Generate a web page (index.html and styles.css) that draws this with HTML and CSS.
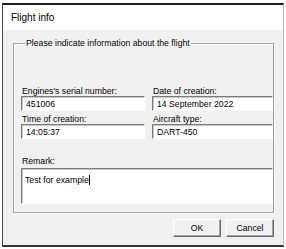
FILE: index.html
```html
<!DOCTYPE html>
<html lang="en">
<head>
<meta charset="UTF-8">
<title>Flight info</title>
<link rel="stylesheet" href="styles.css">
</head>
<body>
<div class="window">
<div class="titlebar">Flight info</div>
<div class="client">
<fieldset class="group">
<legend>Please indicate information about the flight</legend>
<div class="fields">
<div class="field">
<label>Engines's serial number:</label>
<input class="box" type="text" value="451006" readonly>
</div>
<div class="field">
<label>Date of creation:</label>
<input class="box" type="text" value="14 September 2022" readonly>
</div>
<div class="field">
<label>Time of creation:</label>
<input class="box" type="text" value="14:05:37" readonly>
</div>
<div class="field">
<label>Aircraft type:</label>
<input class="box" type="text" value="DART-450" readonly>
</div>
</div>
<div class="remark">
<label>Remark:</label>
<div class="memo">Test for example<span class="caret"></span></div>
</div>
</fieldset>
<div class="buttons">
<button class="btn">OK</button>
<button class="btn">Cancel</button>
</div>
</div>
</div>
</body>
</html>
```

FILE: styles.css
```css
* {
margin: 0;
padding: 0;
box-sizing: border-box;
font-family: "Liberation Sans", Arial, sans-serif;
}
body {
background-color: #fff;
}
.window {
margin: 3px 0 0 2px;
width: 282px;
height: 244px;
display: flex;
flex-direction: column;
border-top: 2px solid #1e1e1e;
border-left: 1px solid #4a4a4a;
border-bottom: 2px solid #333;
border-right: 1px solid #b5b5b5;
}
.titlebar {
height: 25px;
background-color: #fff;
padding-left: 8px;
line-height: 25px;
font-size: 10px;
color: #000;
}
.client {
flex: 1;
background-color: #f0f0f0;
padding: 8px 9px 0 10px;
display: flex;
flex-direction: column;
}
.group {
border: 1px solid #a0a0a0;
box-shadow: 1px 1px 0 #fff, inset 1px 1px 0 #fff;
padding: 38px 0 8px 7px;
}
.group legend {
margin-left: 4px;
padding: 0 1px;
font-size: 8.7px;
line-height: 10px;
color: #000;
}
.fields {
display: grid;
grid-template-columns: 124px 1fr;
column-gap: 7px;
row-gap: 3px;
}
.field label,
.remark label {
display: block;
font-size: 8.7px;
line-height: 10px;
color: #000;
padding-left: 1px;
}
.box {
display: block;
width: 100%;
height: 15px;
border: 1px solid;
border-color: #7a7a7a #fff #fff #7a7a7a;
box-shadow: inset 1px 1px 0 #c8c8c8;
background-color: #fff;
padding: 0 4px;
font-size: 8.7px;
color: #000;
outline: none;
}
.remark {
margin-top: 17px;
}
.remark label {
margin-bottom: 2px;
}
.memo {
height: 36px;
border: 1px solid;
border-color: #7a7a7a #fff #fff #7a7a7a;
box-shadow: inset 1px 1px 0 #c8c8c8;
background-color: #fff;
padding: 6px 3px 0;
font-size: 8.7px;
line-height: 10px;
color: #000;
}
.caret {
display: inline-block;
width: 1px;
height: 10px;
background-color: #000;
vertical-align: top;
}
.buttons {
display: flex;
justify-content: flex-end;
gap: 5px;
margin-top: 6px;
padding-right: 0;
}
.btn {
width: 48px;
height: 18px;
background-color: #f0f0f0;
border: 1px solid;
border-color: #fff #696969 #696969 #fff;
box-shadow: inset -1px -1px 0 #a0a0a0;
font-size: 8.7px;
color: #000;
}
```
